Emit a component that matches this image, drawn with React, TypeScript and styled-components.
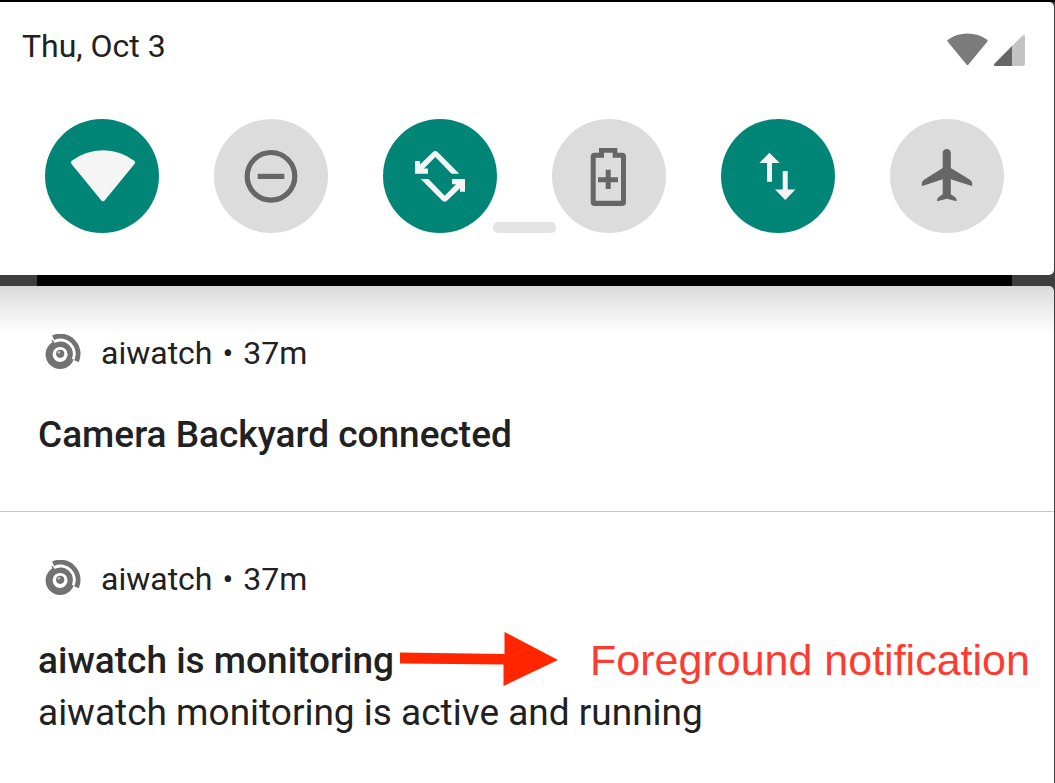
import React from "react";
import styled, { createGlobalStyle } from "styled-components";

const GlobalStyle = createGlobalStyle`
  * { box-sizing: border-box; }
  html, body, #root { height: 100%; }
  body {
    margin: 0;
    background: #3e3e3e;
    color: #212121;
    font-family: Roboto, sans-serif;
  }
  h2, p { margin: 0; }
`;

const Shade = styled.main`
  display: flex;
  flex-direction: column;
  min-height: 100%;
  padding-right: 1px;
  border-top: 2px solid #000;
`;

const QuickSettings = styled.section`
  position: relative;
  padding-bottom: 42px;
  background: #fff;
  border-radius: 0 5px 5px 0;
`;

const StatusBar = styled.header`
  display: flex;
  justify-content: space-between;
  align-items: center;
  height: 88px;
  padding: 0 28px 0 22px;
  font-size: 32px;
  line-height: 40px;
`;

const StatusIcons = styled.div`
  display: flex;
  gap: 6px;
  padding-top: 6px;

  svg { display: block; }
`;

const Tiles = styled.div`
  display: flex;
  justify-content: space-between;
  padding: 29px 50px 0 45px;
`;

const Tile = styled.button<{ $on?: boolean }>`
  width: 114px;
  height: 114px;
  padding: 0;
  border: 0;
  border-radius: 50%;
  background: ${(p) => (p.$on ? "#008577" : "#dcdcdc")};
  color: ${(p) => (p.$on ? "#f5f5f5" : "#666")};

  svg { display: block; }
`;

const Handle = styled.span`
  position: absolute;
  left: calc(50% - 34px);
  bottom: 42px;
  width: 63px;
  height: 11px;
  border-radius: 5px;
  background: #e4e4e4;
`;

const Gap = styled.div`
  height: 11px;
  padding: 0 42px 0 37px;

  &::before {
    content: "";
    display: block;
    height: 100%;
    background: #000;
  }
`;

const Notifications = styled.section`
  flex: 1;
  background: linear-gradient(#d9d9d9, #eee 24px, #fff 48px);
  border-radius: 0 5px 0 0;
`;

const Card = styled.article`
  padding: 46px 20px 49px 38px;

  & + & {
    padding-bottom: 20px;
    border-top: 1px solid #c8c8c8;
  }
`;

const AppLine = styled.div`
  display: flex;
  align-items: center;
  gap: 20px;
  padding-left: 7px;
  margin-bottom: 34px;
  font-size: 32px;
  line-height: 42px;

  svg { margin-bottom: 2px; }
`;

const AppMeta = styled.div`
  display: flex;
  gap: 10px;
`;

const TitleRow = styled.div`
  display: flex;
  align-items: center;
  height: 54px;
`;

const Title = styled.h2`
  font-size: 37px;
  font-weight: 500;
  line-height: 54px;
  white-space: nowrap;
`;

const Body = styled.p`
  font-size: 37px;
  line-height: 50px;
`;

const Arrow = styled.svg`
  flex: none;
  margin: 0 32px 4px 5px;
`;

const Note = styled.span`
  color: #ff3b30;
  font-family: "Liberation Sans", Arial, sans-serif;
  font-size: 43px;
  line-height: 50px;
  padding-bottom: 2px;
  white-space: nowrap;
`;

const TileIcon = ({ children }: { children: React.ReactNode }) => (
  <svg width="114" height="114" viewBox="0 0 114 114" fill="currentColor" aria-hidden="true">
    {children}
  </svg>
);

const ROTATE =
  "M32 42H37V45.5L50 33Q52.3 31 54.6 33L76.3 54.7H68.5L52.3 38L41 49.5H45V54.7H32Z";

const tiles = [
  {
    label: "Wi-Fi",
    on: true,
    icon: <path d="M26.3 44.8Q25 43 26.8 41.8Q40.5 31.2 58 31.2T89.2 41.8Q91 43 89.7 44.8L59.6 81.4Q58 83.2 56.4 81.4Z" />,
  },
  {
    label: "Do not disturb",
    icon: (
      <>
        <circle cx="57" cy="57.3" r="23.8" fill="none" stroke="currentColor" strokeWidth="5.2" />
        <path d="M43.7 54.8H70.3V60H43.7Z" />
      </>
    ),
  },
  {
    label: "Auto-rotate",
    on: true,
    icon: (
      <>
        <path d={ROTATE} />
        <path d={ROTATE} transform="rotate(180 57 57.4)" />
      </>
    ),
  },
  {
    label: "Battery saver",
    icon: (
      <>
        <path
          fillRule="evenodd"
          d="M47 29H65.3V33.7H70Q74 33.7 74 37.7V83Q74 87 70 87H42.7Q38.7 87 38.7 83V37.7Q38.7 33.7 42.7 33.7H47ZM52 33.7V38.7H43.7V81.8H69V38.7H60.7V33.7Z"
        />
        <path d="M53.7 50.7H58.7V58.3H66V63.2H58.7V70H53.7V63.2H46V58.3H53.7Z" />
      </>
    ),
  },
  {
    label: "Mobile data",
    on: true,
    icon: (
      <path d="M48.4 33.7L58.7 44H51V62.7H46V44H38.3ZM61.7 52H66.7V70.6H74.4L64.3 81L54 70.6H61.7Z" />
    ),
  },
  {
    label: "Airplane mode",
    icon: (
      <path d="M52.7 34C52.7 28.7 60.8 28.7 60.8 34V49L80 60.8Q82.2 62.3 82.2 64.5V66Q82.2 67.2 81 66.8L60.8 60.3V75.2L65 78Q66.6 79.3 66.6 81V82.3L56.9 79.7L47.2 82.3V81Q47.2 79.3 48.8 78L52.7 75.2V60.3L33 66.8Q31.8 67.2 31.8 66V64.5Q31.8 62.3 34 60.8L52.7 49Z" />
    ),
  },
];

const AppLogo = () => (
  <svg width="36" height="36" viewBox="0 0 36 36" fill="none" aria-hidden="true">
    <circle cx="15.1" cy="20.4" r="11" stroke="#707274" strokeWidth="7" />
    <path d="M8.8 7.7A13.9 13.9 0 0 1 28.2 25.4" stroke="#fff" strokeWidth="2.8" />
    <path d="M8.1 3.7A17.7 17.7 0 0 1 31.5 27.2" stroke="#707274" strokeWidth="4.8" />
    <path d="M7 6L9 9.6" stroke="#707274" strokeWidth="1.4" />
    <circle cx="15.2" cy="19.8" r="4.1" fill="#707274" />
    <circle cx="13.9" cy="18.2" r="1.2" fill="#ccc" />
  </svg>
);

const AppHeader = () => (
  <AppLine>
    <AppLogo />
    <AppMeta>
      <span>aiwatch</span>
      <span>•</span>
      <time>37m</time>
    </AppMeta>
  </AppLine>
);

export default function App() {
  return (
    <>
      <GlobalStyle />
      <Shade>
        <QuickSettings>
          <StatusBar>
            <time>Thu, Oct 3</time>
            <StatusIcons>
              <svg width="41" height="33" viewBox="0 0 41 33" fill="#7b7b7b" aria-hidden="true">
                <path d="M.6 8.6Q-.2 7.5 .9 6.8Q9.5 .4 20.5 .4T40.1 6.8Q41.2 7.5 40.4 8.6L21.5 31.4Q20.5 32.6 19.5 31.4Z" />
              </svg>
              <svg width="32" height="33" viewBox="0 0 32 33" aria-hidden="true">
                <path d="M18 13L28.5 2.5Q31 1 31 3.5V31Q31 33 29 33H18Z" fill="#c3c3c3" />
                <path d="M18 13V33H1Q-.6 32.5 .4 30.8Z" fill="#666" />
              </svg>
            </StatusIcons>
          </StatusBar>
          <Tiles>
            {tiles.map((t) => (
              <Tile key={t.label} type="button" $on={t.on} aria-label={t.label} aria-pressed={!!t.on}>
                <TileIcon>{t.icon}</TileIcon>
              </Tile>
            ))}
          </Tiles>
          <Handle />
        </QuickSettings>
        <Gap />
        <Notifications>
          <Card>
            <AppHeader />
            <TitleRow>
              <Title>Camera Backyard connected</Title>
            </TitleRow>
          </Card>
          <Card>
            <AppHeader />
            <TitleRow>
              <Title>aiwatch is monitoring</Title>
              <Arrow width="159" height="54" viewBox="0 2 159 54" aria-hidden="true">
                <path d="M1 22.5L105.5 24V2L159 30L104.5 56V34.5L1 33.5Z" fill="#ff2600" />
              </Arrow>
              <Note>Foreground notification</Note>
            </TitleRow>
            <Body>aiwatch monitoring is active and running</Body>
          </Card>
        </Notifications>
      </Shade>
    </>
  );
}
